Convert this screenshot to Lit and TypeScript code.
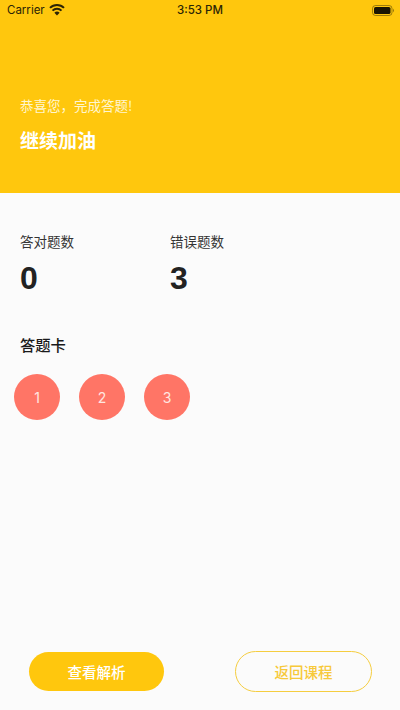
import { LitElement, html, css } from "lit";
import { customElement } from "lit/decorators.js";

@customElement("app-root")
export class AppRoot extends LitElement {
  static styles = css`
    :host {
      display: flex;
      flex-direction: column;
      width: 400px;
      height: 710px;
      overflow: hidden;
      background: #fbfbfb;
      font-family: "Noto Sans CJK SC", "Inter", "Liberation Sans", sans-serif;
      color: #222;
    }
    .hero {
      height: 193px;
      box-sizing: border-box;
      background: #ffc70d;
      display: flex;
      flex-direction: column;
    }
    .status {
      height: 20px;
      display: grid;
      grid-template-columns: 1fr auto 1fr;
      align-items: center;
      font-family: "Inter", "Liberation Sans", sans-serif;
      font-size: 11.5px;
      color: #2b2406;
    }
    .status-left {
      display: flex;
      align-items: center;
      gap: 4px;
      padding-left: 7px;
    }
    .status-right {
      display: flex;
      justify-content: flex-end;
      padding-right: 5px;
    }
    .time { font-weight: 500; }
    .hero-text {
      padding: 75px 0 0 20px;
      color: #fff;
    }
    .congrats {
      font-size: 13.5px;
      line-height: 20px;
      color: #fff6d0;
    }
    .cheer {
      margin-top: 12px;
      font-size: 19px;
      font-weight: 700;
      line-height: 26px;
    }
    .stats {
      display: flex;
      padding: 38px 0 0 20px;
    }
    .stat { width: 150px; }
    .stat-label {
      font-size: 13.5px;
      line-height: 20px;
      color: #333;
    }
    .stat-value {
      margin-top: 9px;
      font-family: "Liberation Sans", "Inter", sans-serif;
      font-size: 32px;
      font-weight: 700;
      line-height: 36px;
      color: #222;
    }
    .card-title {
      margin: 37px 0 0 20px;
      font-size: 15.3px;
      font-weight: 500;
      line-height: 22px;
      color: #1a1a1a;
    }
    .balls {
      display: flex;
      gap: 19px;
      margin: 19px 0 0 14px;
    }
    .ball {
      width: 46px;
      height: 46px;
      border-radius: 50%;
      background: #ff7566;
      color: #ffe6e0;
      display: flex;
      align-items: center;
      justify-content: center;
      font-family: "Inter", "Liberation Sans", sans-serif;
      font-size: 14px;
    }
    .actions {
      margin-top: auto;
      display: flex;
      justify-content: space-between;
      align-items: flex-start;
      padding: 0 28px 18.5px 29px;
    }
    .btn {
      box-sizing: border-box;
      height: 39px;
      border-radius: 20px;
      display: flex;
      align-items: center;
      justify-content: center;
      font-size: 14.5px;
      font-weight: 500;
    }
    .primary {
      margin-top: 1px;
      width: 135px;
      background: #ffc70d;
      color: #fff;
    }
    .secondary {
      width: 137px;
      height: 40.5px;
      border: 1.5px solid #f5cd3f;
      border-radius: 21px;
      color: #f7c93a;
    }
  `;

  render() {
    return html`
      <section class="hero">
        <div class="status">
          <div class="status-left">
            <span>Carrier</span>
            <svg width="16" height="12" viewBox="0 0 16 12">
              <path d="M8 11.5 L5.4 8.7 A3.8 3.8 0 0 1 10.6 8.7 Z" fill="#2b2406" />
              <path d="M3.5 6.6 A6.4 6.4 0 0 1 12.5 6.6" fill="none" stroke="#2b2406" stroke-width="2" />
              <path d="M1 3.9 A10 10 0 0 1 15 3.9" fill="none" stroke="#2b2406" stroke-width="2" />
            </svg>
          </div>
          <div class="time">3:53 PM</div>
          <div class="status-right">
            <svg width="23" height="11" viewBox="0 0 23 11">
              <rect x="0.5" y="0.5" width="19.5" height="10" rx="3" fill="none" stroke="#2b2406" stroke-opacity="0.45" />
              <rect x="2" y="2" width="16.5" height="7" rx="1.6" fill="#1a1502" />
              <path d="M21 3.8 A2 2 0 0 1 21 7.2 Z" fill="#2b2406" fill-opacity="0.5" />
            </svg>
          </div>
        </div>
        <div class="hero-text">
          <div class="congrats">恭喜您，完成答题!</div>
          <div class="cheer">继续加油</div>
        </div>
      </section>
      <section class="stats">
        <div class="stat">
          <div class="stat-label">答对题数</div>
          <div class="stat-value">0</div>
        </div>
        <div class="stat">
          <div class="stat-label">错误题数</div>
          <div class="stat-value">3</div>
        </div>
      </section>
      <div class="card-title">答题卡</div>
      <div class="balls">
        ${[1, 2, 3].map((n) => html`<div class="ball">${n}</div>`)}
      </div>
      <div class="actions">
        <div class="btn primary">查看解析</div>
        <div class="btn secondary">返回课程</div>
      </div>
    `;
  }
}
